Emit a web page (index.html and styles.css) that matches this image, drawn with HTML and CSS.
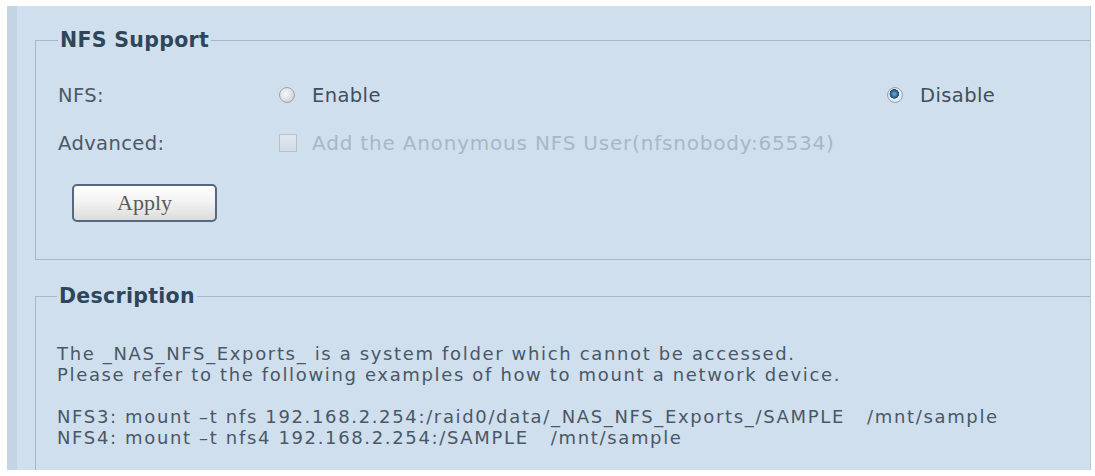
FILE: index.html
```html
<!DOCTYPE html>
<html lang="en">
<head>
<meta charset="utf-8">
<title>NFS Support</title>
<link rel="stylesheet" href="styles.css">
</head>
<body>
<div class="panel">
  <fieldset class="group group-nfs">
    <legend class="group-title">NFS Support</legend>
    <div class="row">
      <span class="label">NFS:</span>
      <label class="opt"><input type="radio" name="nfs" class="radio"><span>Enable</span></label>
      <label class="opt"><input type="radio" name="nfs" class="radio" checked><span>Disable</span></label>
    </div>
    <div class="row">
      <span class="label">Advanced:</span>
      <label class="opt opt-disabled"><input type="checkbox" class="check" disabled><span>Add the Anonymous NFS User(nfsnobody:65534)</span></label>
    </div>
    <div class="actions">
      <button type="button" class="btn">Apply</button>
    </div>
  </fieldset>
  <fieldset class="group group-desc">
    <legend class="group-title">Description</legend>
    <p class="desc">The _NAS_NFS_Exports_ is a system folder which cannot be accessed.<br>Please refer to the following examples of how to mount a network device.</p>
    <p class="desc cmd">NFS3: mount –t nfs 192.168.2.254:/raid0/data/_NAS_NFS_Exports_/SAMPLE   /mnt/sample
NFS4: mount –t nfs4 192.168.2.254:/SAMPLE   /mnt/sample</p>
  </fieldset>
</div>
</body>
</html>
```

FILE: styles.css
```css
* { box-sizing: border-box; }

body {
  margin: 0;
  background: #ffffff;
  font-family: "DejaVu Sans", "Liberation Sans", sans-serif;
}

.panel {
  margin: 6px 4px 0 7px;
  height: 464px;
  background: #d0dfed;
  border-left: 10px solid #c3d4e5;
  border-right: 1px solid #b8c8d9;
  padding: 23px 0 0 18px;
  overflow: hidden;
}

.group {
  margin: 0;
  border: 1px solid #a6b7c8;
  border-right: 0;
  min-width: 0;
}

.group-nfs {
  padding: 20px 0 37px 22px;
}

.group-desc {
  margin-top: 25px;
  padding: 36px 0 60px 21px;
}

.group-title {
  padding: 0 2px;
  font-weight: bold;
  font-size: 20.5px;
  letter-spacing: 0.3px;
  line-height: 22px;
  color: #2f465a;
}

.row {
  display: grid;
  grid-template-columns: 221px 608px auto;
  align-items: center;
  height: 48px;
  font-size: 19.5px;
  letter-spacing: 0.4px;
  color: #4d5867;
}

.opt {
  display: flex;
  align-items: center;
  gap: 17px;
  color: #434e5c;
}

.opt-disabled {
  color: #a9b7c5;
  gap: 15px;
  font-size: 20px;
  letter-spacing: 0.8px;
  white-space: nowrap;
}

.radio {
  appearance: none;
  -webkit-appearance: none;
  margin: 0;
  width: 16px;
  height: 16px;
  border-radius: 50%;
  border: 1px solid #9ea6ae;
  background: radial-gradient(circle at 40% 40%, #f6f6f6 0, #e2e2e2 45%, #bfc4c9 100%);
  flex: none;
}

.radio:checked {
  border-color: #9aa4ae;
  background:
    radial-gradient(circle at 45% 42%, #7ab0d8 0, #2f6b9b 3px, #1f4f78 4.5px, transparent 5px),
    radial-gradient(circle, #f4f6f8 0, #e4e8ec 60%, #c4cad0 100%);
}

.check {
  appearance: none;
  -webkit-appearance: none;
  margin: 0;
  width: 18px;
  height: 18px;
  border: 1px solid #b4c1ce;
  background: linear-gradient(#dfe7ef, #d3dde7);
  flex: none;
}

.actions {
  margin-top: 17px;
  padding-left: 14px;
}

.btn {
  display: block;
  width: 145px;
  height: 38px;
  margin: 0;
  border: 2px solid #56687b;
  border-radius: 5px;
  background: linear-gradient(#ffffff 0%, #f3f3f3 45%, #dcdcdc 100%);
  font-family: "Liberation Serif", serif;
  font-size: 22px;
  color: #5a5a5a;
  padding: 0;
}

.desc {
  margin: 0;
  font-size: 18px;
  letter-spacing: 1.65px;
  line-height: 21px;
  color: #4a5767;
}

.cmd {
  margin-top: 21px;
  white-space: pre;
}
```
